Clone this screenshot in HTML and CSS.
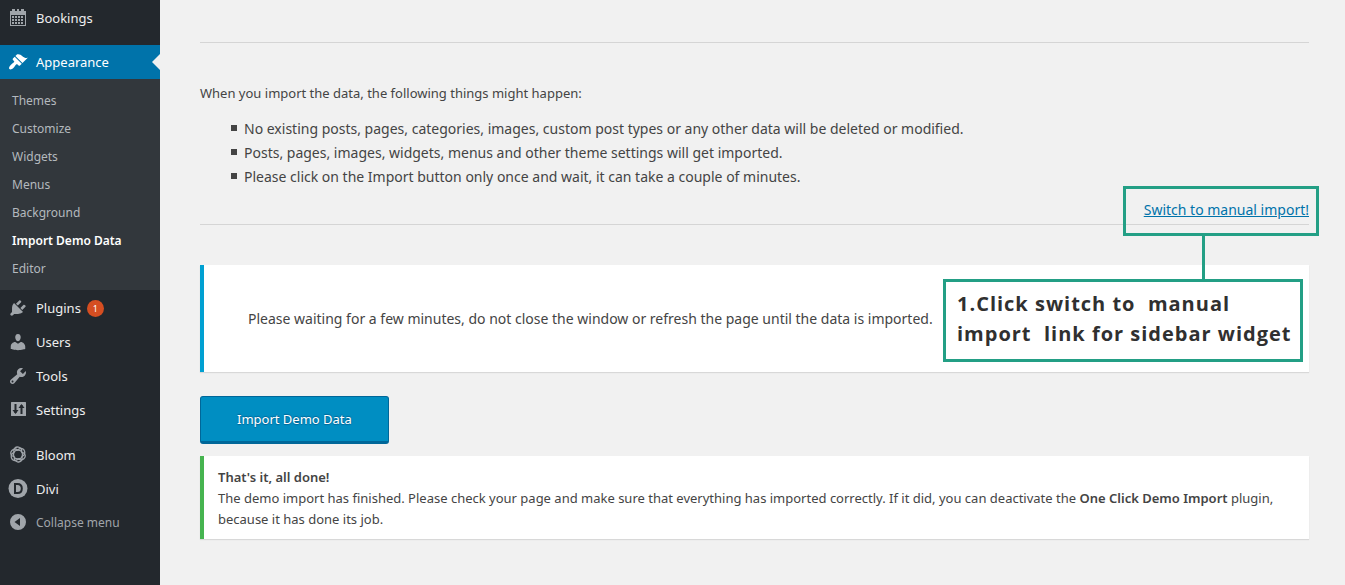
FILE: index.html
```html
<!DOCTYPE html>
<html lang="en">
<head>
<meta charset="utf-8">
<meta name="viewport" content="width=device-width, initial-scale=1">
<title>Import Demo Data</title>
<link rel="stylesheet" href="styles.css">
</head>
<body>
<div class="admin">
  <nav class="menu" aria-label="Main menu">
    <ul class="menu-list">
      <li><a class="item" href="#">
        <svg class="icon" viewBox="0 0 20 20"><path fill-rule="evenodd" d="M2 3h16v15H2zM3 7v10h14V7z"/><path d="M4 1h3v3H4zM13 1h3v3h-3zM9 1h2v3H9z"/><path d="M7 8h2v2H7zM10 8h2v2h-2zM13 8h2v2h-2zM4 11h2v2H4zM7 11h2v2H7zM10 11h2v2h-2zM13 11h2v2h-2zM4 14h2v2H4zM7 14h2v2H7zM10 14h2v2h-2zM13 14h2v2h-2zM4 8h2v2H4z"/></svg>
        Bookings</a></li>
      <li class="gap"><a class="item current" href="#">
        <svg class="icon" viewBox="0 0 20 20"><path d="M14.480 11.060L7.410 3.990l1.500-1.500c.5-.56 2.300-.47 3.510.32 1.210.8 1.430 1.280 2.910 2.100 1.180.64 2.450 1.260 4.450.85zm-.71.71L6.700 4.700 4.930 6.470c-.39.39-.39 1.020 0 1.410l1.060 1.060c.39.39.39 1.030 0 1.420-.6.6-1.430 1.110-2.210 1.690-.35.26-.7.53-1.010.84C1.430 14.230.4 16.080 1.400 17.070c.99 1 2.840-.03 4.180-1.360.31-.31.58-.66.85-1.020.57-.78 1.080-1.610 1.690-2.210.39-.39 1.020-.39 1.410 0l1.060 1.060c.39.39 1.020.39 1.410 0z"/></svg>
        Appearance</a>
        <ul class="submenu">
          <li><a href="#">Themes</a></li>
          <li><a href="#">Customize</a></li>
          <li><a href="#">Widgets</a></li>
          <li><a href="#">Menus</a></li>
          <li><a href="#">Background</a></li>
          <li><a class="active" href="#">Import Demo Data</a></li>
          <li><a href="#">Editor</a></li>
        </ul></li>
      <li><a class="item" href="#">
        <svg class="icon" viewBox="0 0 20 20"><path d="M13.110 4.360L9.870 7.600 8 5.730l3.240-3.240c.35-.34 1.050-.2 1.560.32.52.51.66 1.210.31 1.550zm-8 1.770l.91-1.120 9.010 9.010-1.190.84c-.71.71-2.630 1.160-3.820 1.160H6.140L4.900 17.260c-.59.59-1.540.59-2.120 0-.59-.58-.59-1.530 0-2.120l1.240-1.240v-3.880c0-1.130.4-3.190 1.090-3.890zm7.260 3.970l3.240-3.240c.34-.35 1.040-.21 1.550.31.52.51.66 1.210.31 1.550l-3.240 3.250z"/></svg>
        Plugins <span class="count">1</span></a></li>
      <li><a class="item" href="#">
        <svg class="icon" viewBox="0 0 20 20"><path d="M10 9.250c-2.270 0-2.730-3.440-2.730-3.440C7 4.020 7.820 2 9.970 2c2.160 0 2.980 2.020 2.710 3.810 0 0-.41 3.440-2.680 3.440zm0 2.570L12.720 10c2.390 0 4.520 2.330 4.520 4.530v2.490s-3.650 1.130-7.240 1.130c-3.650 0-7.240-1.130-7.240-1.130v-2.490c0-2.250 1.940-4.480 4.470-4.480z"/></svg>
        Users</a></li>
      <li><a class="item" href="#">
        <svg class="icon" viewBox="0 0 20 20"><path fill-rule="evenodd" d="M16.680 9.770c-1.340 1.340-3.300 1.670-4.950.99l-5.410 6.520c-.99.99-2.590.99-3.580 0s-.99-2.590 0-3.570l6.520-5.420c-.68-1.650-.35-3.610.99-4.950 1.280-1.280 3.120-1.620 4.720-1.060l-2.890 2.890 2.820 2.820 2.860-2.870c.53 1.580.18 3.390-1.080 4.650zM3.810 16.210c.4.39 1.040.39 1.430 0 .4-.4.4-1.040 0-1.430-.39-.4-1.030-.4-1.430 0-.39.39-.39 1.030 0 1.430z"/></svg>
        Tools</a></li>
      <li><a class="item" href="#">
        <svg class="icon" viewBox="0 0 20 20"><rect x="3" y="2" width="15" height="14" rx=".5"/><path class="cut" d="M7.500 4v9M13.500 5v9"/><path class="hole" d="M4.500 10h6l-3 4zM10.500 8h6l-3-4z"/></svg>
        Settings</a></li>
      <li class="gap-last"><a class="item" href="#">
        <svg class="icon rings" viewBox="0 0 20 20"><circle cx="10" cy="9.500" r="4.500"/><g id="petals"><path d="M6 8C5 3 8 1.500 10.500 2.200S14 5 13.500 7"/><path d="M6 8C5 3 8 1.500 10.500 2.200S14 5 13.500 7" transform="rotate(60 10 9.500)"/><path d="M6 8C5 3 8 1.500 10.500 2.200S14 5 13.500 7" transform="rotate(120 10 9.500)"/><path d="M6 8C5 3 8 1.500 10.500 2.200S14 5 13.500 7" transform="rotate(180 10 9.500)"/><path d="M6 8C5 3 8 1.500 10.500 2.200S14 5 13.500 7" transform="rotate(240 10 9.500)"/><path d="M6 8C5 3 8 1.500 10.500 2.200S14 5 13.500 7" transform="rotate(300 10 9.500)"/></g></svg>
        Bloom</a></li>
      <li><a class="item" href="#">
        <svg class="icon" viewBox="0 0 20 20"><circle cx="10" cy="9.500" r="9.500"/><path class="letter" d="M7 5h2.500c3 0 4.300 1.700 4.300 4.500s-1.300 4.500-4.300 4.500H7z"/></svg>
        Divi</a></li>
      <li><button class="item collapse" type="button">
        <svg class="icon" viewBox="0 0 20 20"><path fill-rule="evenodd" d="M10 1a8 8 0 1 1 0 16 8 8 0 0 1 0-16zM12 5L6.500 9l5.500 4z"/></svg>
        Collapse menu</button></li>
    </ul>
  </nav>

  <main class="content">
    <section class="intro">
      <p class="lead">When you import the data, the following things might happen:</p>
      <ul class="facts">
        <li>No existing posts, pages, categories, images, custom post types or any other data will be deleted or modified.</li>
        <li>Posts, pages, images, widgets, menus and other theme settings will get imported.</li>
        <li>Please click on the Import button only once and wait, it can take a couple of minutes.</li>
      </ul>
      <div class="switch">
        <span class="target"><a href="#">Switch to manual import!</a></span>
        <p class="callout">1.Click switch to&nbsp; manual<br>import&nbsp; link for sidebar widget</p>
      </div>
    </section>
    <div class="notice waiting"><p>Please waiting for a few minutes, do not close the window or refresh the page until the data is imported.</p></div>
    <button class="import" type="button">Import Demo Data</button>
    <div class="notice done">
      <p><strong>That's it, all done!</strong><br>The demo import has finished. Please check your page and make sure that everything has imported correctly. If it did, you can deactivate the <strong>One Click Demo Import</strong> plugin, because it has done its job.</p>
    </div>
  </main>
</div>
</body>
</html>
```
FILE: styles.css
```css
* { box-sizing: border-box; }
body {
  margin: 0;
  background: #f1f1f1;
  color: #444;
  font: 13px/21px "Noto Sans", "Open Sans", sans-serif;
}
ul, p { margin: 0; padding: 0; }
strong { font-weight: 600; }
.admin { display: flex; min-height: 100vh; }

.menu { flex: 0 0 160px; background: #23282d; padding-top: 1px; }
.menu-list, .submenu { list-style: none; }
.gap { margin-top: 10px; }
.gap-last { margin-top: 11px; }
.item {
  position: relative;
  display: flex;
  align-items: center;
  gap: 8px;
  width: 100%;
  height: 34px;
  padding: 0 8px;
  border: 0;
  background: none;
  color: #eee;
  font: 13px/18px "Noto Sans", "Open Sans", sans-serif;
  text-decoration: none;
}
.icon { flex: none; width: 20px; height: 20px; fill: #a0a5aa; }
.cut { fill: none; stroke: #23282d; stroke-width: 2; }
.hole { fill: #23282d; }
.letter { fill: none; stroke: #23282d; stroke-width: 2; }
.rings { fill: none; stroke: #a0a5aa; stroke-width: 1.3; }
.current { background: #0073aa; color: #fff; }
.current .icon { fill: #fff; }
.current::after {
  content: "";
  position: absolute;
  right: 0;
  top: 9px;
  border: 8px solid transparent;
  border-left: 0;
  border-right-color: #f1f1f1;
}
.count {
  min-width: 17px;
  height: 17px;
  margin-left: -2px;
  border-radius: 9px;
  background: #d54e21;
  color: #fff;
  font-size: 9px;
  line-height: 17px;
  text-align: center;
}
.collapse { color: #a0a5aa; font-size: 12px; }
.submenu { background: #32373c; padding: 8px 0 7px; border-bottom: 1px solid #23282d; }
.submenu a {
  display: block;
  padding: 5px 12px;
  color: #b4b9be;
  font-size: 12px;
  line-height: 18px;
  text-decoration: none;
}
.submenu .active { color: #fff; font-weight: 600; }

.content { flex: 1; min-width: 0; padding: 42px 36px 40px 40px; }
.intro { border: 1px solid #d5d5d5; border-width: 1px 0; padding-top: 40px; }
.facts { margin: 13px 0 0 44px; list-style: none; font-size: 14px; line-height: 24px; }
.facts li { position: relative; }
.facts li::before {
  content: "";
  position: absolute;
  left: -13px;
  top: 8px;
  width: 6px;
  height: 6px;
  background: #444;
}
.switch {
  position: relative;
  display: flex;
  justify-content: flex-end;
  margin-top: 9px;
  padding-bottom: 2px;
  font-size: 14px;
  line-height: 24px;
}
.switch a { color: #0073aa; }
.target { position: relative; }
.target::before {
  content: "";
  position: absolute;
  inset: -12px -10px -14px -21px;
  border: 3px solid #239f85;
  pointer-events: none;
}
.target::after {
  content: "";
  position: absolute;
  right: 104px;
  top: 38px;
  width: 3px;
  height: 43px;
  background: #239f85;
}
.callout {
  position: absolute;
  z-index: 1;
  right: 6px;
  top: 81px;
  width: 360px;
  padding: 7px 0 10px 11px;
  border: 3px solid #239f85;
  background: #fff;
  color: #303030;
  font: 700 20px/30px "Open Sans", sans-serif;
  letter-spacing: 1px;
  white-space: nowrap;
}
.notice { background: #fff; border-left: 4px solid #46b450; box-shadow: 0 1px 1px rgba(0, 0, 0, 0.1); }
.waiting {
  margin-top: 40px;
  padding: 42px 44px;
  border-color: #00a0d2;
  font-size: 14px;
  line-height: 23px;
}
.import {
  display: block;
  height: 48px;
  margin: 24px 0 12px;
  padding: 0 36px;
  border: 1px solid #006799;
  border-bottom-width: 3px;
  border-radius: 3px;
  background: #008ec2;
  color: #fff;
  font: 13px/20px "Noto Sans", "Open Sans", sans-serif;
  text-shadow: 0 -1px 1px #006799, 0 1px 1px #006799;
}
.done { padding: 11px 14px 9px; }
```
